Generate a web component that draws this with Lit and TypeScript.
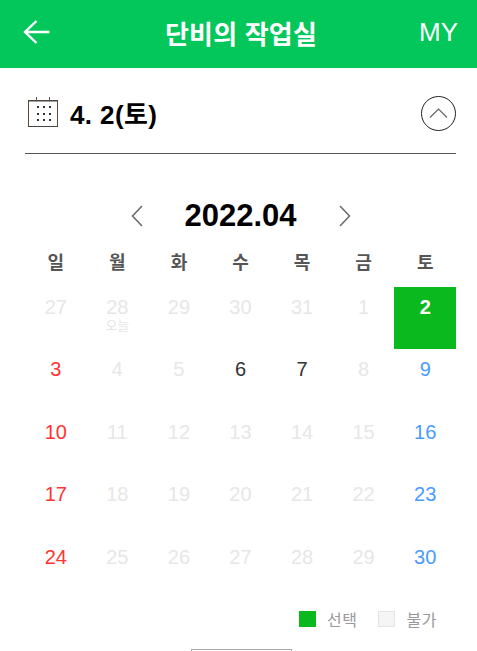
import { LitElement, html, css, svg } from "lit";
import { customElement } from "lit/decorators.js";

type Cell = { d: number; k: string; sub?: string };
const rows: Cell[][] = [
  [{d:27,k:"off"},{d:28,k:"off",sub:"오늘"},{d:29,k:"off"},{d:30,k:"off"},{d:31,k:"off"},{d:1,k:"off"},{d:2,k:"sel"}],
  [{d:3,k:"sun"},{d:4,k:"off"},{d:5,k:"off"},{d:6,k:"on"},{d:7,k:"on"},{d:8,k:"off"},{d:9,k:"sat"}],
  [{d:10,k:"sun"},{d:11,k:"off"},{d:12,k:"off"},{d:13,k:"off"},{d:14,k:"off"},{d:15,k:"off"},{d:16,k:"sat"}],
  [{d:17,k:"sun"},{d:18,k:"off"},{d:19,k:"off"},{d:20,k:"off"},{d:21,k:"off"},{d:22,k:"off"},{d:23,k:"sat"}],
  [{d:24,k:"sun"},{d:25,k:"off"},{d:26,k:"off"},{d:27,k:"off"},{d:28,k:"off"},{d:29,k:"off"},{d:30,k:"sat"}],
];
const days = ["일","월","화","수","목","금","토"];

@customElement("app-root")
export class AppRoot extends LitElement {
  static styles = css`
    :host { display: block; height: 651px; overflow: hidden; background: #fff;
      font-family: "Liberation Sans", Arial, "Noto Sans CJK KR", sans-serif; color: #000; }
    .top { height: 68px; background: #03c75a; color: #fff; display: flex; align-items: center;
      justify-content: space-between; padding: 0 19px 4px 23px; box-sizing: border-box; }
    .top svg { display: block; }
    .title { font-size: 26px; font-weight: 700; letter-spacing: 0.2px; margin-left: 12px; }
    .my { font-size: 26px; }
    .date { margin: 0 21px 0 25px; height: 86px; border-bottom: 1px solid #555; display: flex;
      align-items: center; justify-content: space-between; padding-top: 3px; box-sizing: border-box; }
    .date-l { display: flex; align-items: center; gap: 12px; padding-left: 3px; }
    .date-l span { font-size: 26px; font-weight: 700; letter-spacing: 0.4px; }
    .up { width: 35px; height: 35px; border: 1px solid #222; border-radius: 50%; box-sizing: border-box;
      display: flex; align-items: center; justify-content: center; margin-top: 2px; }
    .month { display: flex; justify-content: center; align-items: center; gap: 41px; margin-top: 42px;
      height: 40px; padding-left: 5px; }
    .month b { font-size: 31px; width: 114px; text-indent: -1px; text-align: center; white-space: nowrap; }
    .cal { margin: 0 21px 0 25px; display: grid; grid-template-columns: repeat(7, 1fr); }
    .dow { height: 51px; display: flex; align-items: center; justify-content: center; font-size: 18px;
      font-weight: 700; color: #555; padding-bottom: 2px; box-sizing: border-box; }
    .cell { height: 62.4px; text-align: center; font-size: 20px; padding-top: 8px; box-sizing: border-box;
      line-height: 24px; }
    .off { color: #e8e6e6; }
    .on { color: #333; }
    .sun { color: #ff3333; }
    .sat { color: #4a9bff; }
    .sel { background: #0ab91e; color: #fff; font-weight: 700; }
    .sub { font-size: 13px; line-height: 13px; color: #e4e4e4; }
    .legend { display: flex; justify-content: flex-end; align-items: center; margin-top: 8px; padding-right: 40px;
      height: 24px; font-size: 16px; color: #999; letter-spacing: 0.5px; }
    .sw { width: 17px; height: 16px; box-sizing: border-box; margin-right: 11px; }
    .sw.g { background: #0ab91e; }
    .sw.n { background: #f5f5f5; border: 1px solid #e2e4e8; margin-right: 12px; }
    .legend span { margin-right: 20px; }
    .legend span:last-child { margin-right: 0; }
    .btn { width: 101px; height: 40px; margin: 18px auto 0 191px; border: 1px solid #aaa; box-sizing: border-box; }
  `;

  private icon() {
    const dots = [];
    for (const y of [9, 16, 22]) for (const x of [9, 15, 21])
      dots.push(svg`<rect x=${x} y=${y} width="2" height="2" fill="#333"/>`);
    return html`<svg width="30" height="31" viewBox="0 0 30 31">
      <rect x="0.5" y="3.5" width="29" height="26" fill="none" stroke="#5c4a35"/>
      <path d="M0.5 4h29" stroke="#444" stroke-width="1"/>
      <path d="M8.5 0v3M21.500 0v3" stroke="#555"/>
      <path d="M0 29.500h30" stroke="#444"/>
      ${dots}
    </svg>`;
  }

  render() {
    return html`
      <div class="top">
        <svg width="28" height="24" viewBox="0 0 28 24" fill="none" stroke="#fff" stroke-width="2.4">
          <path d="M26.500 12H2M13.500 1 2 12l11.500 11"/>
        </svg>
        <div class="title">단비의 작업실</div>
        <div class="my">MY</div>
      </div>
      <div class="date">
        <div class="date-l">${this.icon()}<span>4. 2(토)</span></div>
        <div class="up"><svg width="19" height="10" viewBox="0 0 19 10" fill="none" stroke="#666" stroke-width="1.200"><path d="M1 9.500 9.500 1 18 9.500"/></svg></div>
      </div>
      <div class="month">
        <svg width="12" height="22" viewBox="0 0 12 22" fill="none" stroke="#666" stroke-width="1.500"><path d="M11 1 1.500 11 11 21"/></svg>
        <b>2022.04</b>
        <svg width="12" height="22" viewBox="0 0 12 22" fill="none" stroke="#666" stroke-width="1.500"><path d="M1 1 10.500 11 1 21"/></svg>
      </div>
      <div class="cal">
        ${days.map((d) => html`<div class="dow">${d}</div>`)}
        ${rows.flat().map((c) => html`<div class="cell ${c.k}">${c.d}${c.sub ? html`<div class="sub">${c.sub}</div>` : ""}</div>`)}
      </div>
      <div class="legend">
        <div class="sw g"></div><span>선택</span>
        <div class="sw n"></div><span>불가</span>
      </div>
      <div class="btn"></div>
    `;
  }
}
